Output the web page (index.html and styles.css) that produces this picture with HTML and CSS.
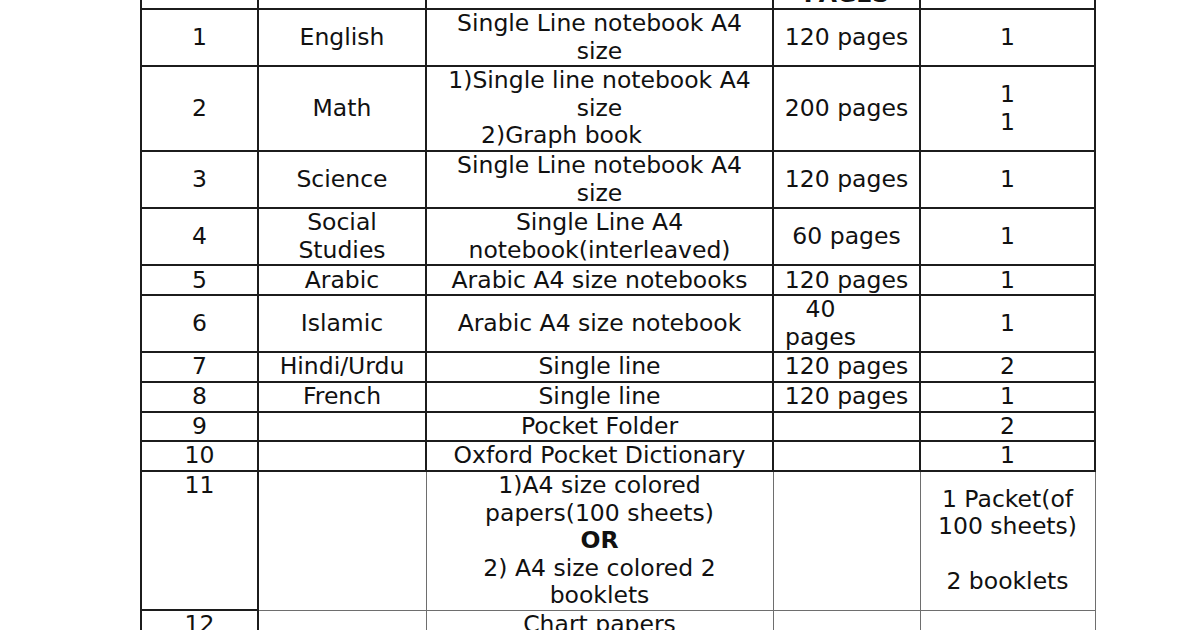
FILE: index.html
```html
<!DOCTYPE html>
<html>
<head>
<meta charset="utf-8">
<link rel="stylesheet" href="styles.css">
</head>
<body>
<div class="page">
<table class="list">
  <colgroup>
    <col class="c1"><col class="c2"><col class="c3"><col class="c4"><col class="c5">
  </colgroup>
  <tr class="head">
    <td>S.NO</td><td>SUBJECT</td><td>DESCRIPTION</td><td>NO. OF<br><span class="low">PAGES</span></td><td>QUANTITY</td>
  </tr>
  <tr><td>1</td><td>English</td><td>Single Line notebook A4<br>size</td><td>120 pages</td><td>1</td></tr>
  <tr><td>2</td><td>Math</td><td>1)Single line notebook A4<br>size<br><span class="shift">2)Graph book</span></td><td>200 pages</td><td>1<br>1</td></tr>
  <tr><td>3</td><td>Science</td><td>Single Line notebook A4<br>size</td><td>120 pages</td><td>1</td></tr>
  <tr><td>4</td><td>Social<br>Studies</td><td>Single Line A4<br>notebook(interleaved)</td><td>60 pages</td><td>1</td></tr>
  <tr><td>5</td><td>Arabic</td><td>Arabic A4 size notebooks</td><td>120 pages</td><td>1</td></tr>
  <tr><td>6</td><td>Islamic</td><td>Arabic A4 size notebook</td><td class="offset">40<br>pages</td><td>1</td></tr>
  <tr><td>7</td><td>Hindi/Urdu</td><td>Single line</td><td>120 pages</td><td>2</td></tr>
  <tr><td>8</td><td>French</td><td>Single line</td><td>120 pages</td><td>1</td></tr>
  <tr><td>9</td><td></td><td>Pocket Folder</td><td></td><td>2</td></tr>
  <tr><td>10</td><td></td><td>Oxford Pocket Dictionary</td><td></td><td>1</td></tr>
  <tr class="light">
    <td class="top">11</td><td></td>
    <td>1)A4 size colored<br>papers(100 sheets)<br><b>OR</b><br>2) A4 size colored 2<br>booklets</td>
    <td></td>
    <td>1 Packet(of<br>100 sheets)<br><br>2 booklets</td>
  </tr>
  <tr class="light">
    <td class="top">12</td><td></td><td class="top">Chart papers</td><td></td><td></td>
  </tr>
</table>
</div>
</body>
</html>
```

FILE: styles.css
```css
html, body {
  margin: 0;
  padding: 0;
  background: #ffffff;
}

.page {
  width: 1200px;
  height: 630px;
  overflow: hidden;
  padding-left: 140px;
  box-sizing: border-box;
}

.list {
  border-collapse: collapse;
  table-layout: fixed;
  width: 954px;
  margin-top: -49px;
  font-family: "DejaVu Sans", "Liberation Sans", sans-serif;
  font-size: 23.5px;
  line-height: 27.5px;
  color: #111111;
}

.c1 { width: 117px; }
.c2 { width: 168px; }
.c3 { width: 347px; }
.c4 { width: 147px; }
.c5 { width: 175px; }

.list td {
  border: 2px solid #1c1c1c;
  padding: 0.1px 0;
  text-align: center;
  vertical-align: middle;
  white-space: nowrap;
}

.list .head td {
  font-weight: bold;
}

.low {
  display: inline-block;
  margin-bottom: -2px;
}

.list td.top {
  vertical-align: top;
}

.list .light td {
  border: 1px solid #6e6e6e;
}

.list .light td:first-child {
  border: 2px solid #1c1c1c;
}

.shift {
  display: block;
  padding-right: 76px;
}

.list td.offset {
  padding-right: 52px;
}
```
